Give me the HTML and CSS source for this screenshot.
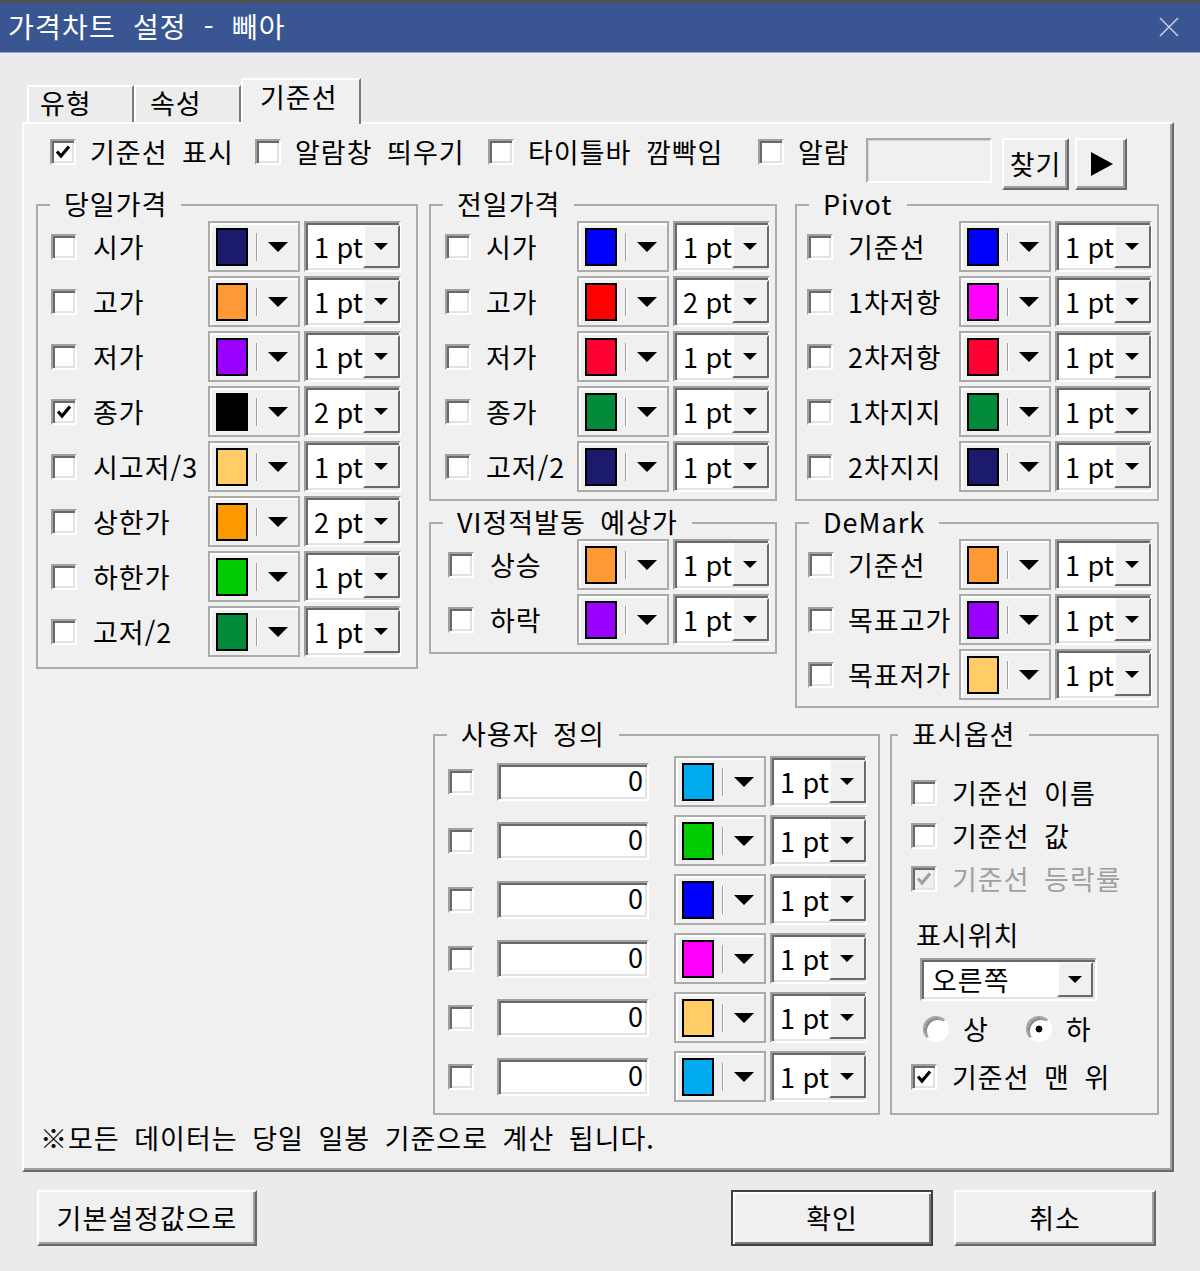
FILE: index.html
```html
<!DOCTYPE html>
<html lang="ko">
<head>
<meta charset="utf-8">
<title>가격차트 설정 - 빼아</title>
<link rel="stylesheet" href="styles.css">
</head>
<body>
<div class="titlebar"><span class="title">가격차트 설정 - 빼아</span><svg class="close" viewBox="0 0 20 20"><path d="M1 1L19 19M19 1L1 19" stroke="#c3cbde" stroke-width="1.6"/></svg></div>
<div class="dlg">
  <div class="tabs"><div class="tab t1">유형</div><div class="tab t2">속성</div><div class="tab sel">기준선</div></div>
  <div class="panel">
    <div class="toprow">
      <div class="opt o1"><span class="cb"><svg viewBox="0 0 18 18"><path d="M3 8.5l4 4.5 8-9.5" fill="none" stroke="#000" stroke-width="3.2"/></svg></span>기준선 표시</div>
      <div class="opt o2"><span class="cb"></span>알람창 띄우기</div>
      <div class="opt o3"><span class="cb"></span>타이틀바 깜빡임</div>
      <div class="opt o4"><span class="cb"></span>알람</div>
      <div class="alarm"></div>
      <div class="btn find">찾기</div>
      <div class="btn play"><i></i></div>
    </div>

    <div class="upper">
      <fieldset class="grp g-day"><legend>당일가격</legend>
        <div class="rows">
          <div class="row"><span class="cb"></span><span class="lbl">시가</span><span class="cc"><i class="sw k-navy"></i><i class="sep"></i><i class="tri"></i></span><span class="wc"><span class="wv">1 pt</span><span class="wb"><i class="tri-s"></i></span></span></div>
          <div class="row"><span class="cb"></span><span class="lbl">고가</span><span class="cc"><i class="sw k-or"></i><i class="sep"></i><i class="tri"></i></span><span class="wc"><span class="wv">1 pt</span><span class="wb"><i class="tri-s"></i></span></span></div>
          <div class="row"><span class="cb"></span><span class="lbl">저가</span><span class="cc"><i class="sw k-pu"></i><i class="sep"></i><i class="tri"></i></span><span class="wc"><span class="wv">1 pt</span><span class="wb"><i class="tri-s"></i></span></span></div>
          <div class="row"><span class="cb"><svg viewBox="0 0 18 18"><path d="M3 8.5l4 4.5 8-9.5" fill="none" stroke="#000" stroke-width="3.2"/></svg></span><span class="lbl">종가</span><span class="cc"><i class="sw k-bk"></i><i class="sep"></i><i class="tri"></i></span><span class="wc"><span class="wv">2 pt</span><span class="wb"><i class="tri-s"></i></span></span></div>
          <div class="row"><span class="cb"></span><span class="lbl">시고저/3</span><span class="cc"><i class="sw k-go"></i><i class="sep"></i><i class="tri"></i></span><span class="wc"><span class="wv">1 pt</span><span class="wb"><i class="tri-s"></i></span></span></div>
          <div class="row"><span class="cb"></span><span class="lbl">상한가</span><span class="cc"><i class="sw k-or2"></i><i class="sep"></i><i class="tri"></i></span><span class="wc"><span class="wv">2 pt</span><span class="wb"><i class="tri-s"></i></span></span></div>
          <div class="row"><span class="cb"></span><span class="lbl">하한가</span><span class="cc"><i class="sw k-gr"></i><i class="sep"></i><i class="tri"></i></span><span class="wc"><span class="wv">1 pt</span><span class="wb"><i class="tri-s"></i></span></span></div>
          <div class="row"><span class="cb"></span><span class="lbl">고저/2</span><span class="cc"><i class="sw k-dg"></i><i class="sep"></i><i class="tri"></i></span><span class="wc"><span class="wv">1 pt</span><span class="wb"><i class="tri-s"></i></span></span></div>
        </div>
      </fieldset>

      <div class="col col2">
        <fieldset class="grp g-prev"><legend>전일가격</legend>
          <div class="rows">
            <div class="row"><span class="cb"></span><span class="lbl">시가</span><span class="cc"><i class="sw k-bl"></i><i class="sep"></i><i class="tri"></i></span><span class="wc"><span class="wv">1 pt</span><span class="wb"><i class="tri-s"></i></span></span></div>
            <div class="row"><span class="cb"></span><span class="lbl">고가</span><span class="cc"><i class="sw k-rd"></i><i class="sep"></i><i class="tri"></i></span><span class="wc"><span class="wv">2 pt</span><span class="wb"><i class="tri-s"></i></span></span></div>
            <div class="row"><span class="cb"></span><span class="lbl">저가</span><span class="cc"><i class="sw k-cr"></i><i class="sep"></i><i class="tri"></i></span><span class="wc"><span class="wv">1 pt</span><span class="wb"><i class="tri-s"></i></span></span></div>
            <div class="row"><span class="cb"></span><span class="lbl">종가</span><span class="cc"><i class="sw k-dg"></i><i class="sep"></i><i class="tri"></i></span><span class="wc"><span class="wv">1 pt</span><span class="wb"><i class="tri-s"></i></span></span></div>
            <div class="row"><span class="cb"></span><span class="lbl">고저/2</span><span class="cc"><i class="sw k-navy"></i><i class="sep"></i><i class="tri"></i></span><span class="wc"><span class="wv">1 pt</span><span class="wb"><i class="tri-s"></i></span></span></div>
          </div>
        </fieldset>
        <fieldset class="grp g-vi"><legend>VI정적발동 예상가</legend>
          <div class="rows">
            <div class="row"><span class="cb"></span><span class="lbl">상승</span><span class="cc"><i class="sw k-or"></i><i class="sep"></i><i class="tri"></i></span><span class="wc"><span class="wv">1 pt</span><span class="wb"><i class="tri-s"></i></span></span></div>
            <div class="row"><span class="cb"></span><span class="lbl">하락</span><span class="cc"><i class="sw k-pu"></i><i class="sep"></i><i class="tri"></i></span><span class="wc"><span class="wv">1 pt</span><span class="wb"><i class="tri-s"></i></span></span></div>
          </div>
        </fieldset>
      </div>

      <div class="col col3">
        <fieldset class="grp g-piv"><legend>Pivot</legend>
          <div class="rows">
            <div class="row"><span class="cb"></span><span class="lbl">기준선</span><span class="cc"><i class="sw k-bl"></i><i class="sep"></i><i class="tri"></i></span><span class="wc"><span class="wv">1 pt</span><span class="wb"><i class="tri-s"></i></span></span></div>
            <div class="row"><span class="cb"></span><span class="lbl">1차저항</span><span class="cc"><i class="sw k-mg"></i><i class="sep"></i><i class="tri"></i></span><span class="wc"><span class="wv">1 pt</span><span class="wb"><i class="tri-s"></i></span></span></div>
            <div class="row"><span class="cb"></span><span class="lbl">2차저항</span><span class="cc"><i class="sw k-cr"></i><i class="sep"></i><i class="tri"></i></span><span class="wc"><span class="wv">1 pt</span><span class="wb"><i class="tri-s"></i></span></span></div>
            <div class="row"><span class="cb"></span><span class="lbl">1차지지</span><span class="cc"><i class="sw k-dg"></i><i class="sep"></i><i class="tri"></i></span><span class="wc"><span class="wv">1 pt</span><span class="wb"><i class="tri-s"></i></span></span></div>
            <div class="row"><span class="cb"></span><span class="lbl">2차지지</span><span class="cc"><i class="sw k-navy"></i><i class="sep"></i><i class="tri"></i></span><span class="wc"><span class="wv">1 pt</span><span class="wb"><i class="tri-s"></i></span></span></div>
          </div>
        </fieldset>
        <fieldset class="grp g-dm"><legend>DeMark</legend>
          <div class="rows">
            <div class="row"><span class="cb"></span><span class="lbl">기준선</span><span class="cc"><i class="sw k-or"></i><i class="sep"></i><i class="tri"></i></span><span class="wc"><span class="wv">1 pt</span><span class="wb"><i class="tri-s"></i></span></span></div>
            <div class="row"><span class="cb"></span><span class="lbl">목표고가</span><span class="cc"><i class="sw k-pu"></i><i class="sep"></i><i class="tri"></i></span><span class="wc"><span class="wv">1 pt</span><span class="wb"><i class="tri-s"></i></span></span></div>
            <div class="row"><span class="cb"></span><span class="lbl">목표저가</span><span class="cc"><i class="sw k-go"></i><i class="sep"></i><i class="tri"></i></span><span class="wc"><span class="wv">1 pt</span><span class="wb"><i class="tri-s"></i></span></span></div>
          </div>
        </fieldset>
      </div>
    </div>

    <div class="lower">
      <fieldset class="grp g-user"><legend>사용자 정의</legend>
        <div class="urows">
          <div class="urow"><span class="cb"></span><span class="inp">0</span><span class="cc"><i class="sw k-sk"></i><i class="sep"></i><i class="tri"></i></span><span class="wc"><span class="wv">1 pt</span><span class="wb"><i class="tri-s"></i></span></span></div>
          <div class="urow"><span class="cb"></span><span class="inp">0</span><span class="cc"><i class="sw k-gr"></i><i class="sep"></i><i class="tri"></i></span><span class="wc"><span class="wv">1 pt</span><span class="wb"><i class="tri-s"></i></span></span></div>
          <div class="urow"><span class="cb"></span><span class="inp">0</span><span class="cc"><i class="sw k-bl"></i><i class="sep"></i><i class="tri"></i></span><span class="wc"><span class="wv">1 pt</span><span class="wb"><i class="tri-s"></i></span></span></div>
          <div class="urow"><span class="cb"></span><span class="inp">0</span><span class="cc"><i class="sw k-mg"></i><i class="sep"></i><i class="tri"></i></span><span class="wc"><span class="wv">1 pt</span><span class="wb"><i class="tri-s"></i></span></span></div>
          <div class="urow"><span class="cb"></span><span class="inp">0</span><span class="cc"><i class="sw k-go"></i><i class="sep"></i><i class="tri"></i></span><span class="wc"><span class="wv">1 pt</span><span class="wb"><i class="tri-s"></i></span></span></div>
          <div class="urow"><span class="cb"></span><span class="inp">0</span><span class="cc"><i class="sw k-sk"></i><i class="sep"></i><i class="tri"></i></span><span class="wc"><span class="wv">1 pt</span><span class="wb"><i class="tri-s"></i></span></span></div>
        </div>
      </fieldset>
      <fieldset class="grp g-opt"><legend>표시옵션</legend>
        <div class="opts">
          <div class="orow"><span class="cb"></span>기준선 이름</div>
          <div class="orow"><span class="cb"></span>기준선 값</div>
          <div class="orow dis-t"><span class="cb dis"><svg viewBox="0 0 18 18"><path d="M3 8.5l4 4.5 8-9.5" fill="none" stroke="#a0a0a0" stroke-width="3.2"/></svg></span>기준선 등락률</div>
          <div class="pos">표시위치</div>
          <div class="dd"><span class="wv">오른쪽</span><span class="wb"><i class="tri-s"></i></span></div>
          <div class="radios"><span class="radio"></span><span>상</span><span class="radio on r2"></span><span>하</span></div>
          <div class="orow last"><span class="cb"><svg viewBox="0 0 18 18"><path d="M3 8.5l4 4.5 8-9.5" fill="none" stroke="#000" stroke-width="3.2"/></svg></span>기준선 맨 위</div>
        </div>
      </fieldset>
    </div>

    <div class="note">※모든 데이터는 당일 일봉 기준으로 계산 됩니다.</div>
  </div>

  <div class="btnrow">
    <div class="btn bbtn b-def">기본설정값으로</div>
    <div class="btn bbtn b-ok">확인</div>
    <div class="btn bbtn b-cancel">취소</div>
  </div>
</div>
</body>
</html>
```

FILE: styles.css
```css
* { box-sizing: border-box; }
html, body { margin: 0; padding: 0; }
body {
  width: 1200px;
  height: 1271px;
  overflow: hidden;
  background: #ebebeb;
  font-family: "Noto Sans CJK KR", "Noto Sans", sans-serif;
  font-size: 27px;
  line-height: 1.15;
  color: #000;
  word-spacing: 6px;
  letter-spacing: 1px;
}

/* title bar */
.titlebar {
  height: 53px;
  border-top: 3px solid #505050;
  border-bottom: 1px solid #93a6cc;
  background: #3a5692;
  color: #fff;
  display: flex;
  align-items: center;
  padding: 0 21px 2px 8px;
}
.title { flex: 1; font-size: 28px; word-spacing: 8px; letter-spacing: 1.2px; }
.close { width: 20px; height: 20px; }

.dlg { padding-left: 22px; }

/* tabs */
.tabs { height: 69px; display: flex; align-items: flex-end; padding-left: 5px; }
.tab {
  height: 37px;
  width: 107px;
  border-top: 2px solid #fff;
  border-left: 2px solid #fff;
  border-right: 2px solid #7a7a7a;
  padding-left: 11px;
  line-height: 32px;
  background: #ececec;
}
.t2 { padding-left: 14px; }
.tab.sel {
  width: 120px;
  height: 46px;
  margin-bottom: -2px;
  position: relative;
  z-index: 1;
  background: #f0f0f0;
  padding-left: 17px;
  line-height: 34px;
}

/* panel */
.panel {
  width: 1152px;
  height: 1050px;
  border: 2px solid;
  border-color: #fff #6a6a6a #6a6a6a #fff;
  box-shadow: inset -2px -2px 0 #a0a0a0;
  background: #f0f0f0;
}

/* common controls */
.cb {
  flex: none;
  width: 26px;
  height: 26px;
  border: 2px solid;
  border-color: #a0a0a0 #fff #fff #a0a0a0;
  box-shadow: inset 2px 2px 0 #696969, inset -2px -2px 0 #e3e3e3;
  background: #fff;
  display: flex;
  align-items: center;
  justify-content: center;
}
.cb svg { width: 18px; height: 18px; }
.cb.dis { background: #f0f0f0; }

.btn {
  display: flex;
  align-items: center;
  justify-content: center;
  background: #f0f0f0;
  border: 2px solid;
  border-color: #fff #696969 #696969 #fff;
  box-shadow: inset -2px -2px 0 #a0a0a0;
}

/* top row */
.toprow { display: flex; align-items: flex-start; height: 67px; padding-left: 26px; }
.opt { display: flex; align-items: center; height: 28px; margin-top: 14px; white-space: nowrap; }
.opt .cb { margin-right: 14px; }
.o1 { width: 205px; }
.o2 { width: 233px; }
.o3 { width: 270px; }
.o4 { width: 108px; }
.alarm {
  width: 126px;
  height: 45px;
  margin-top: 14px;
  border: 2px solid;
  border-color: #a8a8a8 #fff #fff #a8a8a8;
  box-shadow: inset 1px 1px 0 #d4d4d4;
  background: #f0f0f0;
}
.find { width: 67px; height: 52px; margin: 14px 0 0 10px; }
.play { width: 52px; height: 52px; margin: 14px 0 0 6px; }
.play i { border-left: 22px solid #000; border-top: 12px solid transparent; border-bottom: 12px solid transparent; margin-left: 2px; }

/* group boxes */
.grp { margin: 0; padding: 2px 0 0; border: 2px solid #ababab; min-width: 0; }
.grp legend { margin-left: 12px; padding: 0 14px; height: 28px; line-height: 26px; white-space: nowrap; }

.upper { display: flex; align-items: flex-start; padding-left: 12px; height: 517px; }
.col { display: flex; flex-direction: column; }
.col2 { width: 348px; margin-left: 11px; }
.col3 { width: 364px; margin-left: 18px; }

.g-day { width: 382px; padding-bottom: 10px; --pl: 13px; --mr: 16px; --lw: 115px; }
.g-prev { padding-bottom: 7px; --pl: 14px; --mr: 15px; --lw: 91px; }
.g-vi { margin-top: 8px; padding-bottom: 7px; --pl: 17px; --mr: 16px; --lw: 87px; }
.g-piv { padding-bottom: 7px; --pl: 10px; --mr: 15px; --lw: 111px; }
.g-dm { margin-top: 8px; padding-bottom: 6px; --pl: 11px; --mr: 14px; --lw: 111px; }

.rows { padding-left: var(--pl); }
.row { display: flex; align-items: center; height: 51px; margin-bottom: 4px; }
.row:last-child { margin-bottom: 0; }
.row .cb { margin-right: var(--mr); }
.lbl { flex: none; width: var(--lw); white-space: nowrap; }

/* colour combo */
.cc {
  flex: none;
  width: 92px;
  height: 51px;
  border: 2px solid #ababab;
  box-shadow: inset 2px 2px 0 #fff;
  background: #f0f0f0;
  display: flex;
  align-items: center;
  padding-left: 6px;
}
.sw { width: 32px; height: 38px; border: 2px solid #000; }
.sep { width: 2px; height: 28px; margin-left: 8px; border-left: 1px solid #a0a0a0; border-right: 1px solid #fff; }
.tri { margin-left: 10px; border-top: 10px solid #000; border-left: 10px solid transparent; border-right: 10px solid transparent; }

/* width combo */
.wc, .dd {
  flex: none;
  border: 2px solid;
  border-color: #a0a0a0 #fff #fff #a0a0a0;
  box-shadow: inset 2px 2px 0 #696969, inset -2px -2px 0 #e3e3e3;
  background: #fff;
  display: flex;
  align-items: stretch;
  padding: 2px;
}
.wc { width: 97px; height: 51px; margin-left: 4px; }
.wv { flex: 1; padding-left: 6px; display: flex; align-items: center; white-space: nowrap; word-spacing: 0; letter-spacing: 0; }
.wb {
  flex: none;
  width: 37px;
  background: #f0f0f0;
  border: 2px solid;
  border-color: #f4f4f4 #696969 #696969 #fff;
  display: flex;
  align-items: center;
  justify-content: center;
}
.tri-s { border-top: 7px solid #000; border-left: 7px solid transparent; border-right: 7px solid transparent; }

/* swatch colours */
.k-navy { background: #1b1a6c; }
.k-or { background: #ff9933; }
.k-pu { background: #9900ff; }
.k-bk { background: #000; }
.k-go { background: #ffcc66; }
.k-or2 { background: #ff9900; }
.k-gr { background: #00cc00; }
.k-dg { background: #008a3a; }
.k-bl { background: #0000ff; }
.k-rd { background: #ff0000; }
.k-cr { background: #ff0033; }
.k-mg { background: #ff00ff; }
.k-sk { background: #00aaee; }

/* lower section */
.lower { display: flex; align-items: stretch; margin-top: 13px; padding-left: 409px; }
.g-user { width: 447px; padding-bottom: 11px; }
.urows { padding: 5px 0 0 13px; }
.urow { display: flex; align-items: center; height: 51px; margin-bottom: 8px; }
.urow:last-child { margin-bottom: 0; }
.urow .cb { margin-right: 23px; }
.inp {
  flex: none;
  width: 152px;
  height: 38px;
  border: 2px solid;
  border-color: #a0a0a0 #fff #fff #a0a0a0;
  box-shadow: inset 2px 2px 0 #696969, inset -2px -2px 0 #e3e3e3;
  background: #fff;
  text-align: right;
  padding-right: 4px;
  line-height: 30px;
  letter-spacing: 0;
}
.urow .cc { margin-left: 25px; }

.g-opt { width: 269px; margin-left: 10px; }
.g-opt legend { margin-left: 6px; }
.opts { padding: 28px 0 0 19px; display: flex; flex-direction: column; }
.orow { display: flex; align-items: center; height: 27px; white-space: nowrap; }
.orow .cb { margin-right: 15px; }
.orow + .orow { margin-top: 16px; }
.dis-t { color: #a0a0a0; }
.pos { margin-top: 28px; padding-left: 5px; line-height: 30px; }
.dd { width: 177px; height: 43px; margin: 8px 0 0 9px; }
.dd .wv { padding-left: 8px; letter-spacing: 1px; }
.dd .wb { width: 36px; }
.radios { display: flex; align-items: center; height: 33px; margin: 11px 0 0 12px; }
.radio {
  flex: none;
  width: 26px;
  height: 26px;
  border-radius: 50%;
  border: 2px solid;
  border-color: #a0a0a0 #fff #fff #a0a0a0;
  box-shadow: inset 2px 2px 0 #8a8a8a;
  background: #fff;
  margin-right: 14px;
}
.radio.on { background: radial-gradient(circle, #000 0 3px, #fff 3.8px); }
.r2 { margin-left: 37px; }
.orow.last { margin-top: 18px; }

.note { margin-top: 8px; padding-left: 16px; line-height: 30px; }

/* bottom buttons */
.btnrow { display: flex; margin-top: 18px; padding: 0 44px 0 15px; }
.bbtn { height: 56px; }
.b-def { width: 220px; }
.b-ok {
  width: 202px;
  margin-left: auto;
  border-color: #404040;
  box-shadow: inset 2px 2px 0 #fff, inset -2px -2px 0 #7a7a7a;
}
.b-cancel { width: 202px; margin-left: 21px; }
```
